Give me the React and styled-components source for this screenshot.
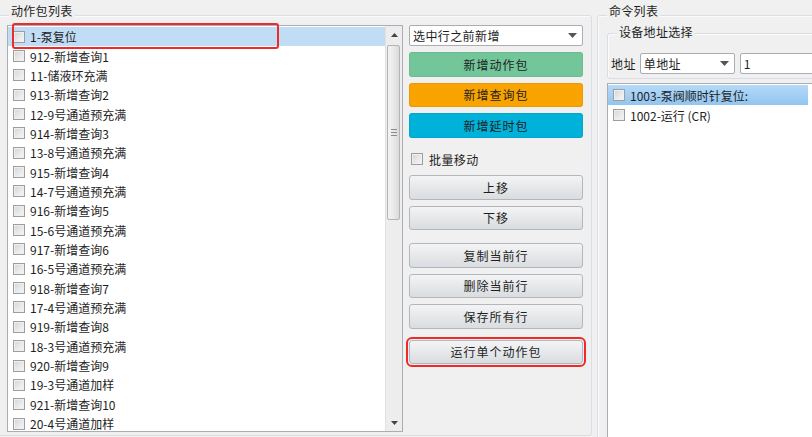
import React from "react";
import styled, { createGlobalStyle } from "styled-components";

const GlobalStyle = createGlobalStyle`
  html, body { margin: 0; padding: 0; background: #f0f0f0; }
  body {
    font-family: "Noto Sans CJK SC", "Noto Sans", sans-serif;
    font-size: 12px;
    color: #1e1e1e;
    overflow: hidden;
  }
  * { box-sizing: border-box; }
`;

const Page = styled.div`
  display: flex;
  align-items: flex-start;
  width: 812px;
  height: 437px;
  overflow: hidden;
  padding-top: 15px;
  background: #f0f0f0;
`;

const Group = styled.div`
  position: relative;
  flex: none;
  border: 1px solid #d5dfe5;
  border-radius: 3px;
  box-shadow: inset 1px 1px 0 #fbfbfb;
`;

const LeftGroup = styled(Group)`
  margin-left: -3px;
  width: 595px;
  height: 421px;
  padding: 9px 8px 3px 9px;
  display: flex;
  gap: 6px;
`;

const RightGroup = styled(Group)`
  margin-left: 5px;
  width: 240px;
  height: 440px;
  padding: 17px 0 0 9px;
  display: flex;
  flex-direction: column;
`;

const GroupTitle = styled.span`
  position: absolute;
  top: ${(p) => p.$top}px;
  left: ${(p) => p.$left}px;
  line-height: 14px;
  padding: 0 2px;
  background: #f0f0f0;
  white-space: nowrap;
  letter-spacing: 0.3px;
`;

/* ---------- left list ---------- */
const ListBox = styled.div`
  position: relative;
  flex: none;
  width: 396px;
  height: 407px;
  border: 1px solid #abadb3;
  background: #fff;
  display: flex;
`;

const Rows = styled.div`
  flex: 1;
  padding-top: 1px;
  overflow: hidden;
`;

const Row = styled.div`
  display: flex;
  align-items: center;
  gap: 5px;
  height: ${(p) => p.$h}px;
  padding-left: 5px;
  white-space: nowrap;
  background: ${(p) =>
    p.$sel === "flat"
      ? "#c1dcf5"
      : p.$sel === "grad"
      ? "linear-gradient(#b4d9f8, #92c5f0)"
      : "transparent"};
`;

const Check = styled.span`
  flex: none;
  width: 12px;
  height: 12px;
  border: 1px solid #9e9e9e;
  background: linear-gradient(135deg, #d4d4d4 0%, #e9e9e9 55%, #f7f7f7 100%);
  box-shadow: inset 0 0 0 1px #efefef;
`;

const Annot = styled.div`
  position: absolute;
  left: 4px;
  top: -3px;
  width: 267px;
  height: 26px;
  border: 2px solid #ee2b2b;
  border-radius: 3px;
  pointer-events: none;
`;

const ScrollBar = styled.div`
  flex: none;
  width: 17px;
  display: flex;
  flex-direction: column;
  background: #ededed;
  border-left: 1px solid #e2e2e2;
`;

const ScrollArrow = styled.div`
  flex: none;
  height: 17px;
  display: flex;
  align-items: center;
  justify-content: center;
`;

const Track = styled.div`
  flex: 1;
  padding: 2px 2px 0 1px;
`;

const Thumb = styled.div`
  height: 175px;
  border: 1px solid #b4b4b4;
  border-radius: 2px;
  background: linear-gradient(90deg, #f4f4f4, #e6e6e6 60%, #dadada);
  display: flex;
  flex-direction: column;
  align-items: center;
  justify-content: center;
  gap: 2px;
`;

const Grip = styled.span`
  width: 6px;
  height: 1px;
  background: #8a8a8a;
`;

/* ---------- middle column ---------- */
const Side = styled.div`
  flex: none;
  width: 174px;
  display: flex;
  flex-direction: column;
`;

const Combo = styled.div`
  flex: none;
  height: 21px;
  width: ${(p) => p.$w || "auto"};
  margin-top: ${(p) => p.$mt || 0}px;
  border: 1px solid #abadb3;
  border-radius: 2px;
  background: #fff;
  display: flex;
  align-items: center;
  justify-content: space-between;
  padding: 0 5px 0 3px;
  white-space: nowrap;
  letter-spacing: 0.4px;
`;

const Btn = styled.button`
  flex: none;
  height: 24.5px;
  margin: ${(p) => p.$mt || 0}px 0 0;
  padding: 0;
  font: inherit;
  font-size: 12px;
  letter-spacing: 1px;
  color: #1e1e1e;
  border-radius: 3px;
  border: 1px solid ${(p) => (p.$bg ? "rgba(0,0,0,0.06)" : "#b3b6ba")};
  background: ${(p) => p.$bg || "linear-gradient(#f3f4f5, #e6e8ea 50%, #dadde0)"};
  outline: ${(p) => (p.$flag ? "2px solid #ee2b2b" : "none")};
  outline-offset: 1px;
`;

const CheckRow = styled.label`
  display: flex;
  align-items: center;
  gap: 6px;
  height: 18px;
  margin-top: ${(p) => p.$mt || 0}px;
  padding-left: 2px;
  letter-spacing: 0.4px;
`;

/* ---------- right side ---------- */
const InnerGroup = styled(Group)`
  width: 231px;
  height: 46px;
  padding: 14px 0 0 3px;
  display: flex;
  align-items: center;
  align-self: flex-start;
  gap: 4px;
`;

const AddrInput = styled.div`
  flex: none;
  width: 90px;
  height: 21px;
  margin-left: 1px;
  border: 1px solid #abadb3;
  border-radius: 2px;
  background: #fff;
  padding-left: 3px;
  display: flex;
  align-items: center;
`;

const FieldLabel = styled.span`
  white-space: nowrap;
  letter-spacing: 0.4px;
`;

const CmdList = styled.div`
  margin-top: 4px;
  width: 220px;
  flex: 1;
  border: 1px solid #abadb3;
  background: #fff;
  padding: 1px 0 0;
`;

const CmdRow = styled(Row)`
  width: 200px;
`;

const Caret = () => (
  <svg width="9" height="5" viewBox="0 0 9 5">
    <path d="M0 0h9L4.5 5z" fill="#555" />
  </svg>
);

const SmallArrow = ({ up }) => (
  <svg width="7" height="4" viewBox="0 0 7 4">
    <path d={up ? "M0 4h7L3.5 0z" : "M0 0h7L3.5 4z"} fill="#444" />
  </svg>
);

const packs = [
  "1-泵复位",
  "912-新增查询1",
  "11-储液环充满",
  "913-新增查询2",
  "12-9号通道预充满",
  "914-新增查询3",
  "13-8号通道预充满",
  "915-新增查询4",
  "14-7号通道预充满",
  "916-新增查询5",
  "15-6号通道预充满",
  "917-新增查询6",
  "16-5号通道预充满",
  "918-新增查询7",
  "17-4号通道预充满",
  "919-新增查询8",
  "18-3号通道预充满",
  "920-新增查询9",
  "19-3号通道加样",
  "921-新增查询10",
  "20-4号通道加样",
];

export default function App() {
  return (
    <>
      <GlobalStyle />
      <Page>
        <LeftGroup>
          <GroupTitle $top={-12} $left={11}>动作包列表</GroupTitle>
          <ListBox>
            <Rows>
              {packs.map((t, i) => (
                <Row key={t} $h={19.35} $sel={i === 0 ? "flat" : undefined}>
                  <Check />
                  <span>{t}</span>
                </Row>
              ))}
            </Rows>
            <ScrollBar>
              <ScrollArrow>
                <SmallArrow up />
              </ScrollArrow>
              <Track>
                <Thumb>
                  <Grip />
                  <Grip />
                  <Grip />
                </Thumb>
              </Track>
              <ScrollArrow>
                <SmallArrow />
              </ScrollArrow>
            </ScrollBar>
            <Annot />
          </ListBox>

          <Side>
            <Combo>
              <span>选中行之前新增</span>
              <Caret />
            </Combo>
            <Btn $mt={6} $bg="#72c69a">新增动作包</Btn>
            <Btn $mt={6} $bg="#f9a300">新增查询包</Btn>
            <Btn $mt={6} $bg="#00b1d9">新增延时包</Btn>
            <CheckRow $mt={12.5}>
              <Check />
              <span>批量移动</span>
            </CheckRow>
            <Btn $mt={7}>上移</Btn>
            <Btn $mt={6}>下移</Btn>
            <Btn $mt={13}>复制当前行</Btn>
            <Btn $mt={6}>删除当前行</Btn>
            <Btn $mt={6}>保存所有行</Btn>
            <Btn $mt={11} $flag>运行单个动作包</Btn>
          </Side>
        </LeftGroup>

        <RightGroup>
          <GroupTitle $top={-12} $left={9}>命令列表</GroupTitle>
          <InnerGroup>
            <GroupTitle $top={-9} $left={9}>设备地址选择</GroupTitle>
            <FieldLabel>地址</FieldLabel>
            <Combo $w="95px">
              <span>单地址</span>
              <Caret />
            </Combo>
            <AddrInput>1</AddrInput>
          </InnerGroup>
          <CmdList>
            <CmdRow $h={20} $sel="grad">
              <Check />
              <span>1003-泵阀顺时针复位:</span>
            </CmdRow>
            <CmdRow $h={20}>
              <Check />
              <span>1002-运行 (CR)</span>
            </CmdRow>
          </CmdList>
        </RightGroup>
      </Page>
    </>
  );
}
